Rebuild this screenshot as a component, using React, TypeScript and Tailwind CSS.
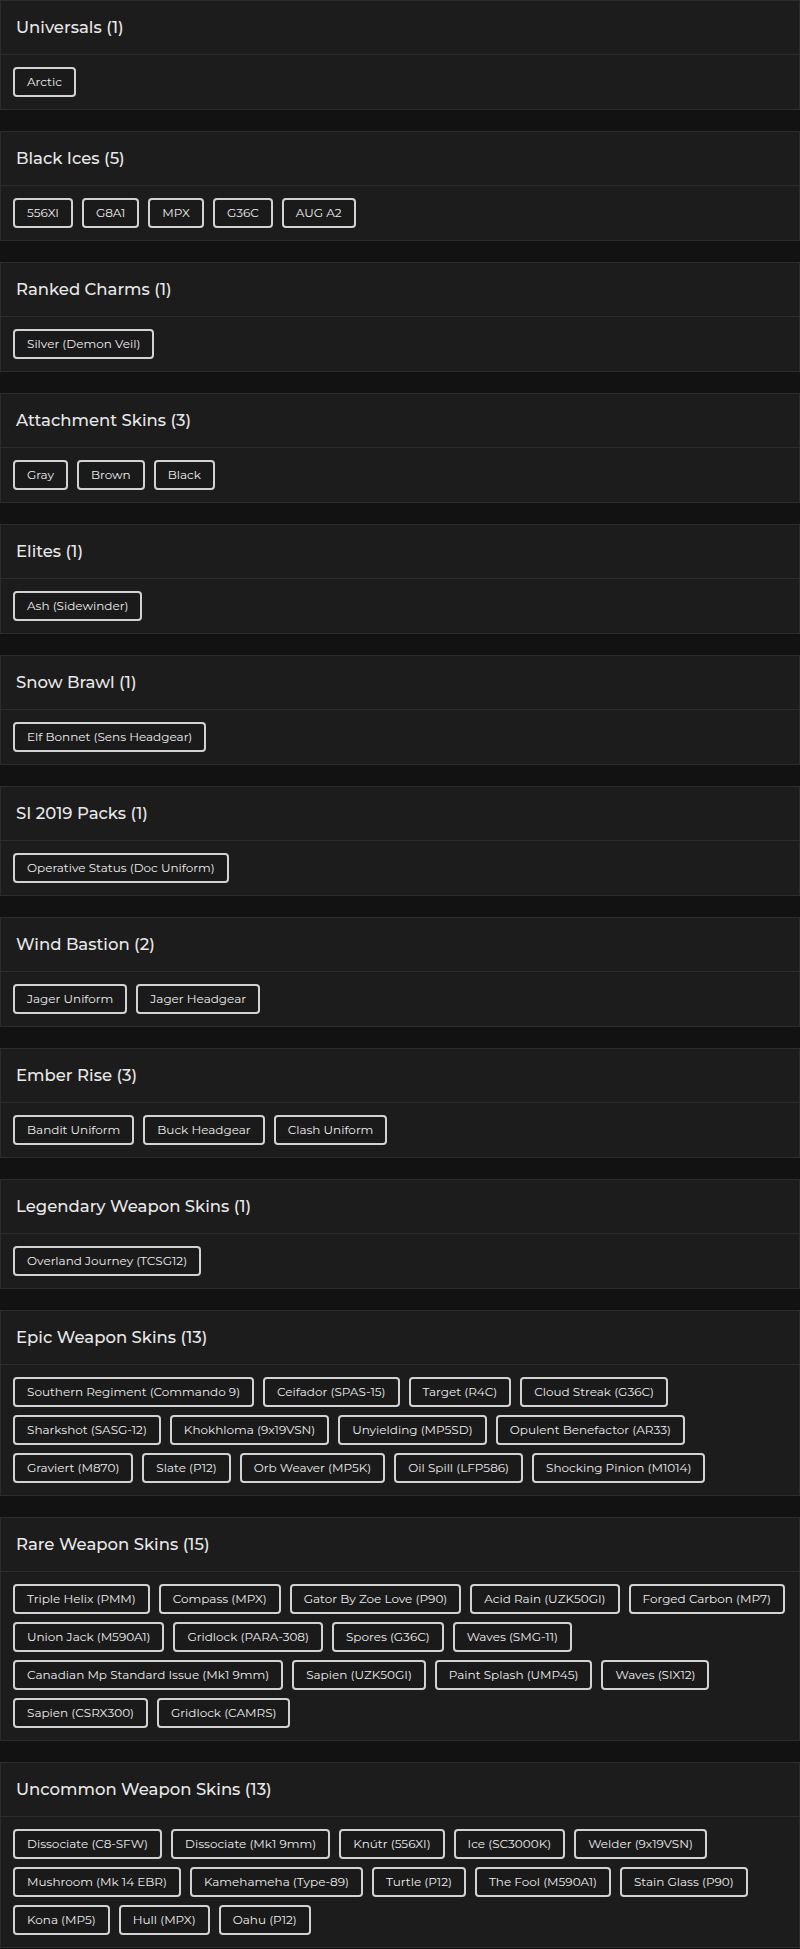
const groups: { title: string; items: string[] }[] = [
  { title: "Universals", items: ["Arctic"] },
  { title: "Black Ices", items: ["556XI", "G8A1", "MPX", "G36C", "AUG A2"] },
  { title: "Ranked Charms", items: ["Silver (Demon Veil)"] },
  { title: "Attachment Skins", items: ["Gray", "Brown", "Black"] },
  { title: "Elites", items: ["Ash (Sidewinder)"] },
  { title: "Snow Brawl", items: ["Elf Bonnet (Sens Headgear)"] },
  { title: "SI 2019 Packs", items: ["Operative Status (Doc Uniform)"] },
  { title: "Wind Bastion", items: ["Jager Uniform", "Jager Headgear"] },
  { title: "Ember Rise", items: ["Bandit Uniform", "Buck Headgear", "Clash Uniform"] },
  { title: "Legendary Weapon Skins", items: ["Overland Journey (TCSG12)"] },
  {
    title: "Epic Weapon Skins",
    items: [
      "Southern Regiment (Commando 9)",
      "Ceifador (SPAS-15)",
      "Target (R4C)",
      "Cloud Streak (G36C)",
      "Sharkshot (SASG-12)",
      "Khokhloma (9x19VSN)",
      "Unyielding (MP5SD)",
      "Opulent Benefactor (AR33)",
      "Graviert (M870)",
      "Slate (P12)",
      "Orb Weaver (MP5K)",
      "Oil Spill (LFP586)",
      "Shocking Pinion (M1014)",
    ],
  },
  {
    title: "Rare Weapon Skins",
    items: [
      "Triple Helix (PMM)",
      "Compass (MPX)",
      "Gator By Zoe Love (P90)",
      "Acid Rain (UZK50GI)",
      "Forged Carbon (MP7)",
      "Union Jack (M590A1)",
      "Gridlock (PARA-308)",
      "Spores (G36C)",
      "Waves (SMG-11)",
      "Canadian Mp Standard Issue (Mk1 9mm)",
      "Sapien (UZK50GI)",
      "Paint Splash (UMP45)",
      "Waves (SIX12)",
      "Sapien (CSRX300)",
      "Gridlock (CAMRS)",
    ],
  },
  {
    title: "Uncommon Weapon Skins",
    items: [
      "Dissociate (C8-SFW)",
      "Dissociate (Mk1 9mm)",
      "Knútr (556XI)",
      "Ice (SC3000K)",
      "Welder (9x19VSN)",
      "Mushroom (Mk 14 EBR)",
      "Kamehameha (Type-89)",
      "Turtle (P12)",
      "The Fool (M590A1)",
      "Stain Glass (P90)",
      "Kona (MP5)",
      "Hull (MPX)",
      "Oahu (P12)",
    ],
  },
];

export default function App() {
  return (
    <div className="min-h-screen bg-[#121212] font-['Montserrat','Inter',sans-serif] text-[#e8e8e8]">
      <div className="flex flex-col gap-[21px]">
        {groups.map((group) => (
          <div
            key={group.title}
            className="border border-[#2c2c2c] bg-[#1c1c1c]"
          >
            {/* Header */}
            <div className="flex h-[54px] items-center border-b border-[#2c2c2c] pl-[15px]">
              <h2 className="text-[16.5px] font-medium">
                {group.title} ({group.items.length})
              </h2>
            </div>
            {/* Tags */}
            <div className="flex flex-wrap gap-x-[9px] gap-y-2 p-3">
              {group.items.map((item) => (
                <span
                  key={item}
                  className="flex h-[30px] items-center rounded-[4px] border-2 border-[#d2d2d2] bg-[#1a1a1a] px-3 text-[12px] text-[#ececec]"
                >
                  {item}
                </span>
              ))}
            </div>
          </div>
        ))}
      </div>
    </div>
  );
}
